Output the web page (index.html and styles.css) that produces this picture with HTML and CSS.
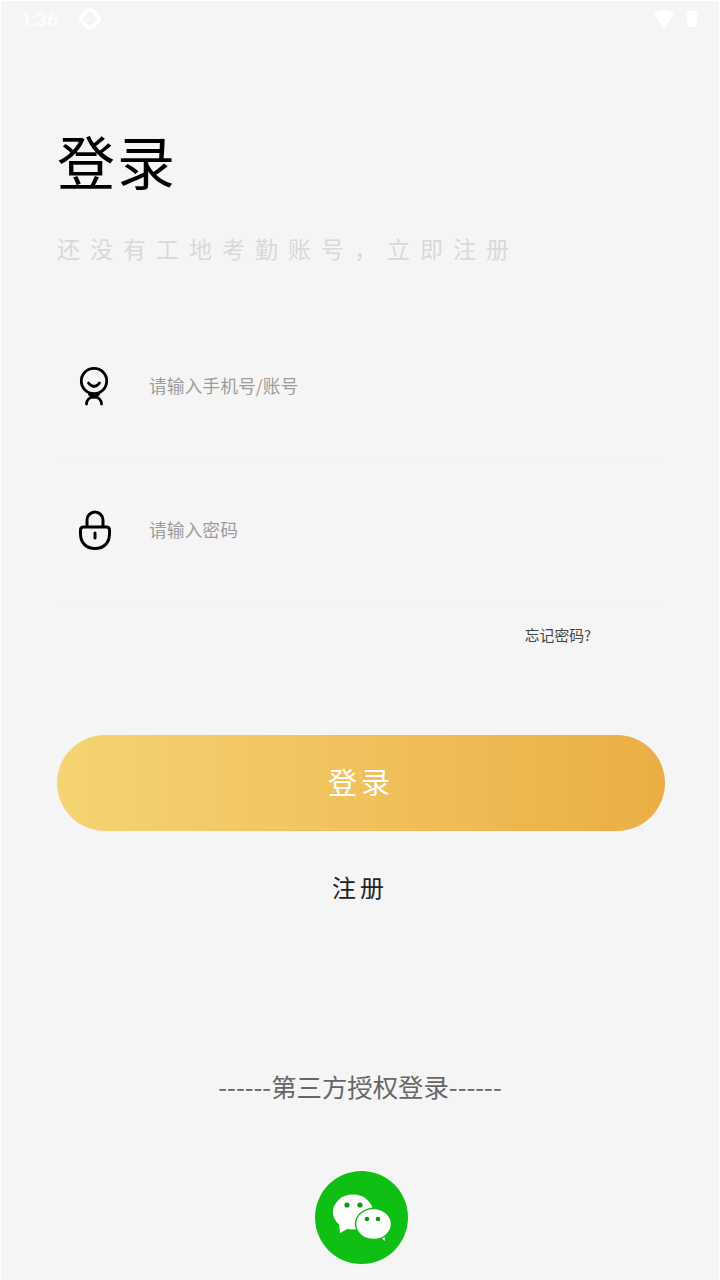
FILE: index.html
```html
<!DOCTYPE html>
<html lang="zh-CN">
<head>
    <meta charset="UTF-8">
    <title>登录</title>
    <link rel="stylesheet" href="styles.css">
</head>
<body>
    <div class="screen">
        <div class="status-bar">
            <div class="status-left">
                <span class="clock">1:36</span>
                <svg class="status-app" width="24" height="24" viewBox="0 0 24 24" fill="none" stroke="#fff" stroke-width="3.500" stroke-linejoin="round" stroke-linecap="round">
                    <path d="M10 3.500L3.500 10c-1 1-1 3 0 4l4 4M14 3.500l4 2.500"/>
                    <path d="M14 20.500l6.500-6.500c1-1 1-3 0-4l-4-4M10 20.500l-1-1"/>
                    <path d="M10 3.500c1-1 3-1 4 0M10 20.500c1 1 3 1 4 0" stroke-width="2.500"/>
                </svg>
            </div>
            <div class="status-right">
                <svg width="20" height="18" viewBox="0 0 20 18"><path d="M0 4C5-1 15-1 20 4L10 18z" fill="#fff"/></svg>
                <div class="battery"></div>
            </div>
        </div>

        <h1 class="title">登录</h1>
        <p class="sub">还没有工地考勤账号，立即注册</p>

        <div class="field field-user">
            <svg class="field-icon" width="32" height="40" viewBox="0 0 32 40" fill="none" stroke="#000" stroke-width="2.800" stroke-linecap="round">
                <circle cx="16" cy="15" r="12.700"/>
                <path d="M10.500 17q5.500 7 11 0"/>
                <path d="M8.500 38c0-4 3-7 7.500-7s7.500 3 7.500 7"/>
                <path d="M11.500 28.500l4.500 2.500 4.500-2.500"/>
            </svg>
            <span class="hint">请输入手机号/账号</span>
        </div>
        <div class="field field-pass">
            <svg class="field-icon" width="34" height="40" viewBox="0 0 34 40" fill="none" stroke="#000" stroke-width="3">
                <path d="M9 17V10a8 8 0 0 1 16 0v7"/>
                <path d="M2.500 20c0-2 1-3 3-3h23c2 0 3 1 3 3v4c0 9-6 14.500-14.500 14.500S2.500 33 2.500 24z"/>
                <path d="M17 23v5" stroke-linecap="round"/>
            </svg>
            <span class="hint">请输入密码</span>
        </div>
        <div class="forgot-row"><span class="forgot">忘记密码?</span></div>

        <div class="login-btn">登录</div>
        <div class="reg-link">注册</div>

        <div class="third">------第三方授权登录------</div>
        <div class="wechat">
            <svg width="64" height="52" viewBox="0 0 64 52">
                <path d="M9 31L10 41 19 36z" fill="#fff"/>
                <ellipse cx="23" cy="20" rx="20" ry="17.500" fill="#fff"/>
                <path d="M49 44L55 49 54 40z" fill="#fff"/>
                <ellipse cx="43.500" cy="32" rx="18" ry="15.500" fill="#fff" stroke="#0fbf14" stroke-width="1.500"/>
                <circle cx="17" cy="13" r="2.600" fill="#0c9a10"/>
                <circle cx="30" cy="13" r="2.600" fill="#0c9a10"/>
                <circle cx="37" cy="27" r="2.300" fill="#0c9a10"/>
                <circle cx="48" cy="27" r="2.300" fill="#0c9a10"/>
            </svg>
        </div>
    </div>
</body>
</html>
```

FILE: styles.css
```css
*{
    margin: 0;
    padding: 0;
    box-sizing: border-box;
}
body{
    background: #f5f5f5;
    font-family: "Noto Sans CJK SC", "Noto Sans", sans-serif;
}
.screen{
    width: 720px;
    height: 1280px;
    overflow: hidden;
    background: #f5f5f5;
    border: 1px solid #fff;
    border-bottom: 0;
    display: flex;
    flex-direction: column;
}
.status-bar{
    height: 36px;
    padding: 0 22px 0 20px;
    display: flex;
    align-items: center;
    justify-content: space-between;
}
.status-left,.status-right{
    display: flex;
    align-items: center;
}
.clock{
    font-family: Roboto, sans-serif;
    font-size: 19px;
    color: #fff;
    margin-right: 20px;
}
.status-right{
    gap: 13px;
}
.battery{
    width: 10px;
    height: 16px;
    background: #fff;
    border-radius: 2px;
}
.title{
    margin: 85px 0 0 56px;
    font-size: 58px;
    line-height: 76px;
    font-weight: 400;
    letter-spacing: 2px;
    color: #000;
}
.sub{
    margin: 33px 0 0 56px;
    font-size: 23px;
    line-height: 34px;
    letter-spacing: 10px;
    color: #d9d9d9;
    white-space: nowrap;
}
.field{
    margin: 0 56px;
    height: 139px;
    padding-left: 21px;
    display: flex;
    align-items: center;
    border-bottom: 1px solid #f2f2f2;
}
.field-user{
    margin-top: 60px;
    padding-bottom: 17px;
}
.field-pass{
    padding-bottom: 7px;
}
.field-icon{
    flex: none;
}
.field-user .hint{
    margin-left: 39px;
}
.field-pass .hint{
    margin-left: 37px;
}
.hint{
    font-size: 17.800px;
    margin-bottom: 2px;
    color: #9c9c9c;
}
.forgot-row{
    display: flex;
    justify-content: flex-end;
    padding-right: 128px;
    margin-top: 22px;
}
.forgot{
    font-size: 14.800px;
    line-height: 20px;
    color: #444;
}
.login-btn{
    margin: 90px 0 0 56px;
    width: 608px;
    height: 96px;
    padding-bottom: 4px;
    border-radius: 48px;
    background: linear-gradient(90deg, #f5d473, #ebae45);
    color: #fff;
    font-size: 29px;
    letter-spacing: 4px;
    display: flex;
    align-items: center;
    justify-content: center;
}
.reg-link{
    margin-top: 38px;
    text-align: center;
    font-size: 24px;
    line-height: 36px;
    letter-spacing: 4px;
    color: #222;
}
.third{
    margin-top: 163px;
    text-align: center;
    font-size: 25.400px;
    line-height: 36px;
    color: #666;
}
.wechat{
    width: 93px;
    height: 93px;
    margin: 67px 0 0 314px;
    border-radius: 50%;
    background: #0fbf14;
    display: flex;
    align-items: center;
    justify-content: center;
}
```
